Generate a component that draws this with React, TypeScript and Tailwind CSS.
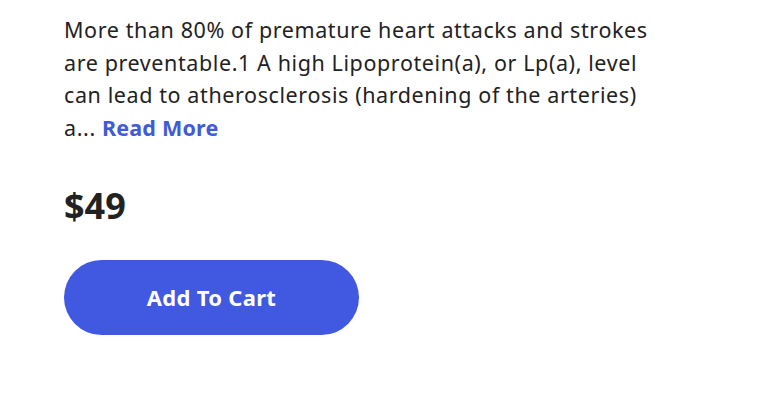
export default function App() {
  return (
    <div className="min-h-[410px] w-[784px] bg-white font-['Noto_Sans',sans-serif] text-[#222222]">
      <div className="px-[64px] pt-[14px]">
        <p className="text-[21.5px] leading-[32.5px] tracking-[0.6px]">
          More than 80% of premature heart attacks and strokes
          <br />
          are preventable.1 A high Lipoprotein(a), or Lp(a), level
          <br />
          can lead to atherosclerosis (hardening of the arteries)
          <br />
          a...{" "}
          <a href="#" className="font-bold tracking-[0.2px] text-[#3f5bd8]">
            Read More
          </a>
        </p>
        <div className="mt-[42px] text-[36px] font-bold leading-[40px]">$49</div>
        <button className="mt-[34px] flex h-[75px] w-[295px] items-center justify-center rounded-full bg-[#4159e0] text-[22px] font-bold tracking-[0.3px] text-white">
          Add To Cart
        </button>
      </div>
    </div>
  );
}
